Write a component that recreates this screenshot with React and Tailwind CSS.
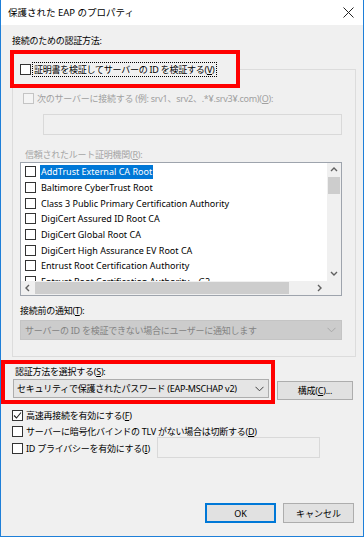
import React from 'react';

const font = "font-['Noto_Sans','Noto_Sans_CJK_JP',sans-serif]";

const certs = [
  'AddTrust External CA Root',
  'Baltimore CyberTrust Root',
  'Class 3 Public Primary Certification Authority',
  'DigiCert Assured ID Root CA',
  'DigiCert Global Root CA',
  'DigiCert High Assurance EV Root CA',
  'Entrust Root Certification Authority',
  'Entrust Root Certification Authority – G2',
];

const Box = ({ checked, disabled }) => (
  <span
    className={`flex w-[11px] h-[11px] shrink-0 items-center justify-center border ${
      disabled ? 'border-[#c4c4c4] bg-[#f4f4f4]' : 'border-[#333333] bg-white'
    }`}
  >
    {checked && (
      <svg width="9" height="9" viewBox="0 0 9 9">
        <path d="M1 4.5 L3.5 7 L8 1.5" fill="none" stroke="#222" strokeWidth="1.1" />
      </svg>
    )}
  </span>
);

const Chevron = ({ color }) => (
  <svg width="9" height="6" viewBox="0 0 9 6">
    <path d="M0.5 0.8 L4.5 4.8 L8.5 0.8" fill="none" stroke={color} strokeWidth="1" />
  </svg>
);

const Arrow = ({ dir }) => {
  const d = {
    up: 'M1 5 L4 2 L7 5',
    down: 'M1 2 L4 5 L7 2',
    left: 'M5 1 L2 4 L5 7',
    right: 'M2 1 L5 4 L2 7',
  }[dir];
  return (
    <svg width="8" height="8" viewBox="0 0 8 8">
      <path d={d} fill="none" stroke="#606060" strokeWidth="1.4" />
    </svg>
  );
};

const u = (c) => <span className="underline">{c}</span>;

export default function App() {
  return (
    <div className={`${font} w-[364px] h-[537px] flex flex-col border-x border-b border-[#1e7fd8] bg-[#f0f0f0] text-[9px] text-black leading-none tracking-[-0.25px] whitespace-nowrap`}>
      {/* title bar */}
      <div className="h-[25px] shrink-0 bg-white flex items-center justify-between pl-[7px] pr-[9px] tracking-normal">
        <span className="text-[9.5px]">保護された EAP のプロパティ</span>
        <svg width="11" height="11" viewBox="0 0 11 11">
          <path d="M0.5 0.5 L10.5 10.5 M10.5 0.5 L0.5 10.5" stroke="#222" strokeWidth="1" />
        </svg>
      </div>

      <div className="flex-1 flex flex-col">
        <div className="pl-[11px] pt-[11px] h-[25px] flex items-start">接続のための認証方法:</div>

        {/* group title with annotation box */}
        <div className="relative z-10 ml-[9px] w-[230px] h-[38px] border-[4px] border-[#ff0000] bg-[#f0f0f0] flex items-center pl-[6px] gap-[1px]">
          <Box />
          <span className="border border-dotted border-black px-[1px] py-[2px]">
            証明書を検証してサーバーの ID を検証する({u('V')})
          </span>
        </div>

        <div className="ml-[11px] mt-[-19px] w-[344px] border border-[#dcdcdc] pt-[18px] pl-[7px] pr-[12px] pb-[16px]">
          <div className="flex items-center h-[14px] mt-[3px] pl-[3px] gap-[3px] text-[#a0a0a0]">
            <Box disabled />
            <span>次のサーバーに接続する (例: srv1、srv2、.*¥.srv3¥.com)({u('O')}):</span>
          </div>
          <div className="ml-[23px] mt-[9px] w-[299px] h-[21px] border border-[#d9d9d9] bg-[#f0f0f0]" />

          <div className="mt-[12px] h-[14px] pl-[5px] flex items-center text-[#a6a6a6]">
            信頼されたルート証明機関({u('R')}):
          </div>

          <div className="mt-[1px] w-[322px] h-[134px] border border-[#9ea4ad] bg-white flex flex-col tracking-normal">
            <div className="flex flex-1 min-h-0">
              <div className="flex-1 overflow-hidden pt-[1px]">
                {certs.map((c, i) => (
                  <div key={c} className="h-[15.7px] flex items-center pl-[4px] gap-[4px]">
                    <Box />
                    <span
                      className={`px-[1px] h-[14px] flex items-center ${i === 0 ? 'bg-[#0078d7] text-white' : ''}`}
                    >
                      {c}
                    </span>
                  </div>
                ))}
              </div>
              <div className="w-[14px] bg-[#f0f0f0] flex flex-col items-center">
                <div className="h-[14px] flex items-center justify-center"><Arrow dir="up" /></div>
                <div className="w-[12px] h-[17px] bg-[#cdcdcd]" />
                <div className="flex-1" />
                <div className="h-[14px] flex items-center justify-center"><Arrow dir="down" /></div>
              </div>
            </div>
            <div className="h-[14px] flex bg-[#f0f0f0]">
              <div className="w-[14px] flex items-center justify-center"><Arrow dir="left" /></div>
              <div className="flex-1 flex items-center pr-[24px]">
                <div className="w-full h-[12px] bg-[#cdcdcd]" />
              </div>
              <div className="w-[14px] flex items-center justify-center"><Arrow dir="right" /></div>
              <div className="w-[14px] bg-[#f0f0f0]" />
            </div>
          </div>

          <div className="mt-[7px] h-[14px] flex items-center">接続前の通知({u('T')}):</div>
          <div className="mt-[3px] w-[322px] h-[20px] border border-[#c4c4c4] bg-[#cccccc] flex items-center justify-between pl-[4px] pr-[5px] text-[#838383]">
            <span>サーバーの ID を検証できない場合にユーザーに通知します</span>
            <Chevron color="#a8a8a8" />
          </div>
        </div>

        <div className="flex items-start mt-[3px]">
          <div className="w-[274px] h-[44px] border-[4px] border-[#ff0000] pl-[8px] pr-[2px] flex flex-col">
            <div className="h-[14px] flex items-center pl-[2px]">認証方法を選択する({u('S')}):</div>
            <div className="mt-[1px] h-[19px] border border-[#adadad] bg-[#e5e5e5] flex items-center justify-between pl-[3px] pr-[4px]">
              <span>セキュリティで保護されたパスワード (EAP-MSCHAP v2)</span>
              <Chevron color="#404040" />
            </div>
          </div>
          <button className="ml-[2px] mt-[21px] w-[76px] h-[19px] border border-[#adadad] bg-[#e1e1e1] flex items-center justify-center">
            構成({u('C')})...
          </button>
        </div>

        <div className="pl-[11px] mt-[6px] flex flex-col gap-[5px]">
          <div className="flex items-center gap-[3px] h-[11px]">
            <Box checked />
            <span>高速再接続を有効にする({u('F')})</span>
          </div>
          <div className="flex items-center gap-[3px] h-[11px]">
            <Box />
            <span>サーバーに暗号化バインドの TLV がない場合は切断する({u('D')})</span>
          </div>
          <div className="flex items-start">
            <div className="flex items-center gap-[3px] h-[11px] w-[145px] mt-[1px]">
              <Box />
              <span>ID プライバシーを有効にする({u('I')})</span>
            </div>
            <div className="mt-[-5px] w-[163px] h-[21px] border border-[#d9d9d9] bg-[#f0f0f0]" />
          </div>
        </div>

        <div className="flex-1" />
        <div className="flex justify-end gap-[7px] pr-[9px] pb-[13px] tracking-normal">
          <button className="w-[71px] h-[20px] border-2 border-[#0078d7] bg-[#e1e1e1] flex items-center justify-center">OK</button>
          <button className="w-[71px] h-[20px] border border-[#adadad] bg-[#e1e1e1] flex items-center justify-center">キャンセル</button>
        </div>
      </div>
    </div>
  );
}
